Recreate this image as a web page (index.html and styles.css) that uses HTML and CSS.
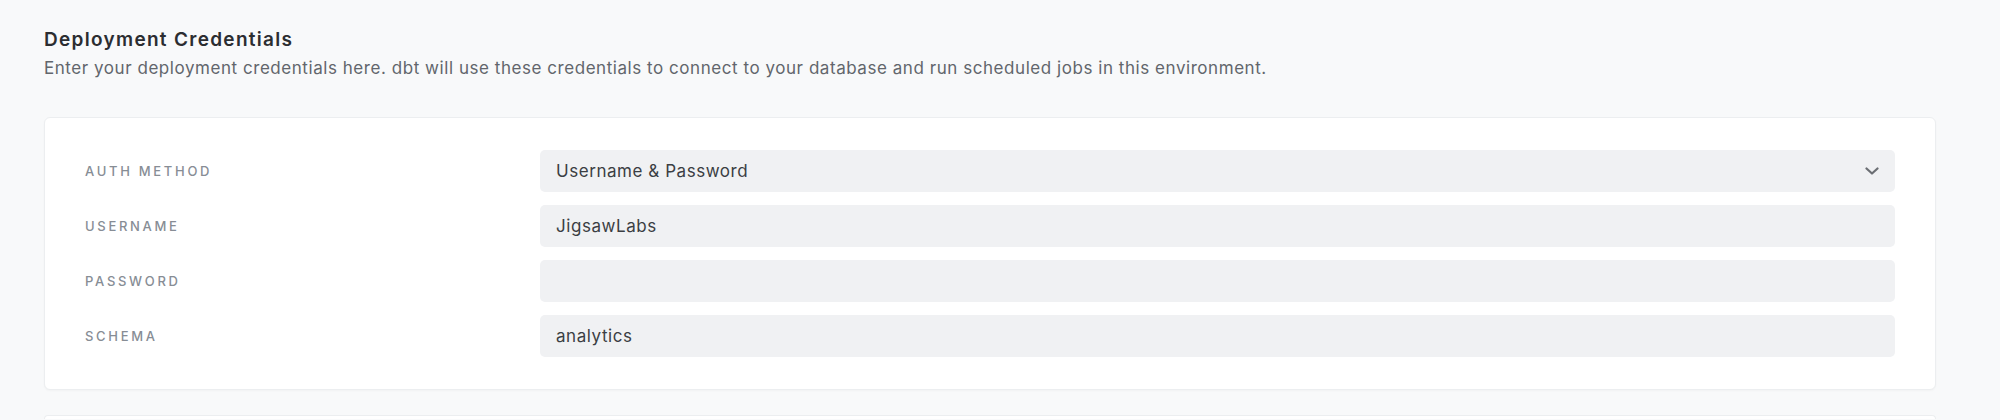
FILE: index.html
```html
<!DOCTYPE html>
<html lang="en">
<head>
<meta charset="utf-8">
<title>Deployment Credentials</title>
<link rel="stylesheet" href="styles.css">
</head>
<body>
<main class="page">
  <header class="section-head">
    <h2 class="section-title">Deployment Credentials</h2>
    <p class="section-desc">Enter your deployment credentials here. dbt will use these credentials to connect to your database and run scheduled jobs in this environment.</p>
  </header>

  <section class="card">
    <div class="form-row">
      <label class="field-label" for="auth">Auth Method</label>
      <div class="select-wrap">
        <div class="field field-select" id="auth">Username &amp; Password</div>
        <svg class="chevron" width="14" height="8" viewBox="0 0 14 8" aria-hidden="true">
          <path d="M1.5 1.5 L7 6.5 L12.5 1.5" fill="none" stroke="#6b6e73" stroke-width="2.2" stroke-linecap="round" stroke-linejoin="round"/>
        </svg>
      </div>
    </div>
    <div class="form-row">
      <label class="field-label" for="user">Username</label>
      <div class="field" id="user">JigsawLabs</div>
    </div>
    <div class="form-row">
      <label class="field-label" for="pass">Password</label>
      <div class="field" id="pass"></div>
    </div>
    <div class="form-row">
      <label class="field-label" for="schema">Schema</label>
      <div class="field" id="schema">analytics</div>
    </div>
  </section>

  <section class="card card-next"></section>
</main>
</body>
</html>
```

FILE: styles.css
```css
* { box-sizing: border-box; }

html, body {
  margin: 0;
  padding: 0;
  background: #f8f9fa;
}

body {
  font-family: Inter, "Noto Sans", "Liberation Sans", sans-serif;
  color: #2d2f33;
  height: 420px;
  overflow: hidden;
}

.page {
  padding: 28px 64px 0 44px;
}

.section-head {
  margin-bottom: 37px;
}

.section-title {
  margin: 0;
  font-size: 19px;
  line-height: 24px;
  font-weight: 600;
  letter-spacing: 1.3px;
  color: #2b2d31;
}

.section-desc {
  margin: 4px 0 0;
  font-size: 17px;
  line-height: 24px;
  letter-spacing: 0.55px;
  color: #62666c;
}

.card {
  background: #ffffff;
  border: 1px solid #eceef0;
  border-radius: 6px;
  box-shadow: 0 1px 2px rgba(0, 0, 0, 0.03);
  padding: 32px 40px;
  display: flex;
  flex-direction: column;
  gap: 13px;
}

.card-next {
  margin-top: 25px;
  height: 4px;
  padding: 0;
  border-bottom: none;
  border-radius: 6px 6px 0 0;
  box-shadow: none;
}

.form-row {
  display: grid;
  grid-template-columns: 455px 1fr;
  align-items: center;
}

.field-label {
  font-size: 13px;
  line-height: 16px;
  letter-spacing: 2.7px;
  text-transform: uppercase;
  color: #878d95;
  font-weight: 500;
}

.select-wrap {
  position: relative;
}

.field {
  height: 42px;
  background: #f0f1f3;
  border-radius: 5px;
  padding: 0 16px;
  display: flex;
  align-items: center;
  font-size: 17px;
  letter-spacing: 0.55px;
  color: #3b3e43;
}

.chevron {
  position: absolute;
  right: 16px;
  top: 17px;
}
```
